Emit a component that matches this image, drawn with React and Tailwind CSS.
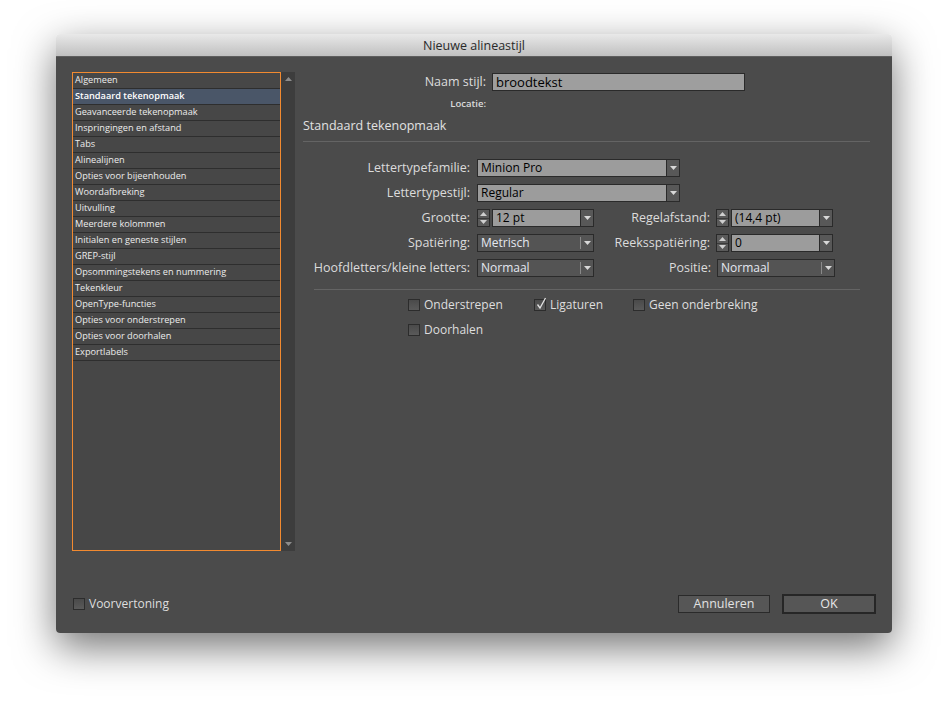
import React from "react";

const items = [
  "Algemeen",
  "Standaard tekenopmaak",
  "Geavanceerde tekenopmaak",
  "Inspringingen en afstand",
  "Tabs",
  "Alinealijnen",
  "Opties voor bijeenhouden",
  "Woordafbreking",
  "Uitvulling",
  "Meerdere kolommen",
  "Initialen en geneste stijlen",
  "GREP-stijl",
  "Opsommingstekens en nummering",
  "Tekenkleur",
  "OpenType-functies",
  "Opties voor onderstrepen",
  "Opties voor doorhalen",
  "Exportlabels",
];

function Tri({ up, color = "#d8d8d8" }) {
  return (
    <svg width="7" height="4" viewBox="0 0 7 4">
      <polygon points={up ? "0,4 7,4 3.5,0" : "0,0 7,0 3.5,4"} fill={color} />
    </svg>
  );
}

// editable combo: grey field with black text + arrow button
function Combo({ value, className }) {
  return (
    <div className={`flex h-[18px] bg-[#2a2a2a] p-px gap-px ${className}`}>
      <div className="flex-1 bg-[#9c9c9c] pl-[3px] text-[12px] leading-[16px] text-black">{value}</div>
      <div className="flex w-[12px] items-center justify-center bg-[#585858]">
        <Tri />
      </div>
    </div>
  );
}

// popup button: dark face, light text, divider before the arrow
function Popup({ value, className }) {
  return (
    <div className={`flex h-[18px] items-center border border-[#2a2a2a] bg-[#545454] ${className}`}>
      <div className="flex-1 pl-[3px] text-[12px] leading-[16px] text-[#e4e8f0]">{value}</div>
      <div className="h-[12px] w-px bg-[#8a8a8a]" />
      <div className="flex w-[12px] items-center justify-center">
        <Tri />
      </div>
    </div>
  );
}

function Spinner() {
  return (
    <div className="flex h-[18px] w-[13px] flex-col border border-[#2a2a2a] bg-[#5a5a5a]">
      <div className="flex flex-1 items-center justify-center border-b border-[#3a3a3a]">
        <Tri up color="#cfcfcf" />
      </div>
      <div className="flex flex-1 items-center justify-center">
        <Tri color="#cfcfcf" />
      </div>
    </div>
  );
}

function Check({ checked, label, className = "" }) {
  return (
    <div className={`flex items-center gap-[4px] ${className}`}>
      <div className="relative flex h-[12px] w-[12px] items-center justify-center border border-[#2c2c2c] bg-gradient-to-b from-[#4a4a4a] to-[#5a5a5a]">
        {checked && (
          <svg className="absolute -top-[3px] left-[1px]" width="11" height="13" viewBox="0 0 11 13">
            <path d="M1.5 7.5 L4 11 L9.5 1" stroke="#e2e2e2" strokeWidth="1.3" fill="none" />
          </svg>
        )}
      </div>
      <span className="text-[12px] leading-[16px] text-[#dedede]">{label}</span>
    </div>
  );
}

function Label({ children, className }) {
  return <div className={`text-right text-[12.5px] leading-[18px] text-[#dcdcdc] ${className}`}>{children}</div>;
}

export default function App() {
  return (
    <div className="h-[712px] w-[948px] bg-white pl-[56px] pt-[34px] font-['Open_Sans',sans-serif]">
      <div className="w-[836px] overflow-hidden rounded-[4px] shadow-[0_14px_40px_rgba(0,0,0,0.55)]">
        <div className="flex h-[23px] items-center justify-center border-b border-[#5e5e5e] bg-gradient-to-b from-[#e9e9e9] to-[#c0c0c0] pt-[2px] text-[12.5px] text-[#2a2a2a]">
          Nieuwe alineastijl
        </div>

        <div className="flex h-[576px] flex-col bg-[#4b4b4b] pl-[16px] pr-[15px] pt-[15px]">
          <div className="flex">
            {/* category list */}
            <div className="flex h-[479px] w-[223px]">
              <div className="w-[209px] border border-[#f28a30] bg-[#474747]">
                {items.map((it, i) => (
                  <div
                    key={it}
                    className={`h-[16px] truncate border-b border-[#2e2e2e] pl-[2px] text-[9.2px] leading-[14px] ${
                      i === 1 ? "bg-[#4a5668] font-semibold text-white" : "text-[#ececec]"
                    }`}
                  >
                    {it}
                  </div>
                ))}
              </div>
              <div className="flex w-[14px] flex-col items-center justify-between bg-[#3d3d3d] py-[5px]">
                <Tri up color="#8c8c8c" />
                <Tri color="#8c8c8c" />
              </div>
            </div>

            {/* settings */}
            <div className="ml-[8px] w-[567px]">
              <div className="mt-[1px] flex h-[18px] items-center">
                <Label className="w-[189px] pr-[6px]">Naam stijl:</Label>
                <div className="h-[18px] w-[253px] border border-[#2a2a2a] bg-[#9e9e9e] pl-[3px] text-[13px] leading-[16px] text-black">
                  broodtekst
                </div>
              </div>
              <div className="mt-[7px] w-[183px] text-right text-[9.5px] font-semibold leading-[12px] text-[#dcdcdc]">Locatie:</div>
              <div className="mt-[8px] text-[12.5px] leading-[16px] text-[#e2e2e2]">Standaard tekenopmaak</div>
              <div className="mt-[7px] h-px bg-[#646464]" />

              <div className="mt-[17px] flex h-[18px] items-center">
                <Label className="w-[174px] pr-[7px]">Lettertypefamilie:</Label>
                <Combo value="Minion Pro" className="w-[203px]" />
              </div>
              <div className="mt-[7px] flex h-[18px] items-center">
                <Label className="w-[174px] pr-[7px]">Lettertypestijl:</Label>
                <Combo value="Regular" className="w-[203px]" />
              </div>
              <div className="mt-[7px] flex h-[18px] items-center">
                <Label className="w-[174px] pr-[7px]">Grootte:</Label>
                <Spinner />
                <Combo value="12 pt" className="ml-[2px] w-[102px]" />
                <Label className="w-[122px] pr-[6px]">Regelafstand:</Label>
                <Spinner />
                <Combo value="(14,4 pt)" className="ml-[2px] w-[102px]" />
              </div>
              <div className="mt-[7px] flex h-[18px] items-center">
                <Label className="w-[174px] pr-[7px]">Spatiëring:</Label>
                <Popup value="Metrisch" className="w-[117px]" />
                <Label className="w-[122px] pr-[6px]">Reeksspatiëring:</Label>
                <Spinner />
                <Combo value="0" className="ml-[2px] w-[102px]" />
              </div>
              <div className="mt-[7px] flex h-[18px] items-center">
                <Label className="w-[174px] pr-[7px]">Hoofdletters/kleine letters:</Label>
                <Popup value="Normaal" className="w-[117px]" />
                <Label className="w-[123px] pr-[6px]">Positie:</Label>
                <Popup value="Normaal" className="w-[118px]" />
              </div>

              <div className="ml-[11px] mt-[12px] h-px w-[546px] bg-[#646464]" />

              <div className="ml-[105px] mt-[7px] flex h-[16px]">
                <Check label="Onderstrepen" className="w-[126px]" />
                <Check checked label="Ligaturen" className="w-[99px]" />
                <Check label="Geen onderbreking" />
              </div>
              <div className="ml-[105px] mt-[9px] flex h-[16px]">
                <Check label="Doorhalen" />
              </div>
            </div>
          </div>

          {/* footer */}
          <div className="mt-[43px] flex h-[20px] items-center pr-[1px]">
            <Check label="Voorvertoning" className="ml-[1px]" />
            <div className="ml-auto flex items-center">
              <div className="flex h-[18px] w-[92px] items-center justify-center border border-[#2a2a2a] bg-[#565656] text-[12.5px] text-[#e2e2e2]">
                Annuleren
              </div>
              <div className="ml-[12px] flex h-[20px] w-[94px] items-center justify-center border-2 border-[#262626] bg-[#565656] text-[12.5px] text-[#e8e8e8]">
                OK
              </div>
            </div>
          </div>
        </div>
      </div>
    </div>
  );
}
